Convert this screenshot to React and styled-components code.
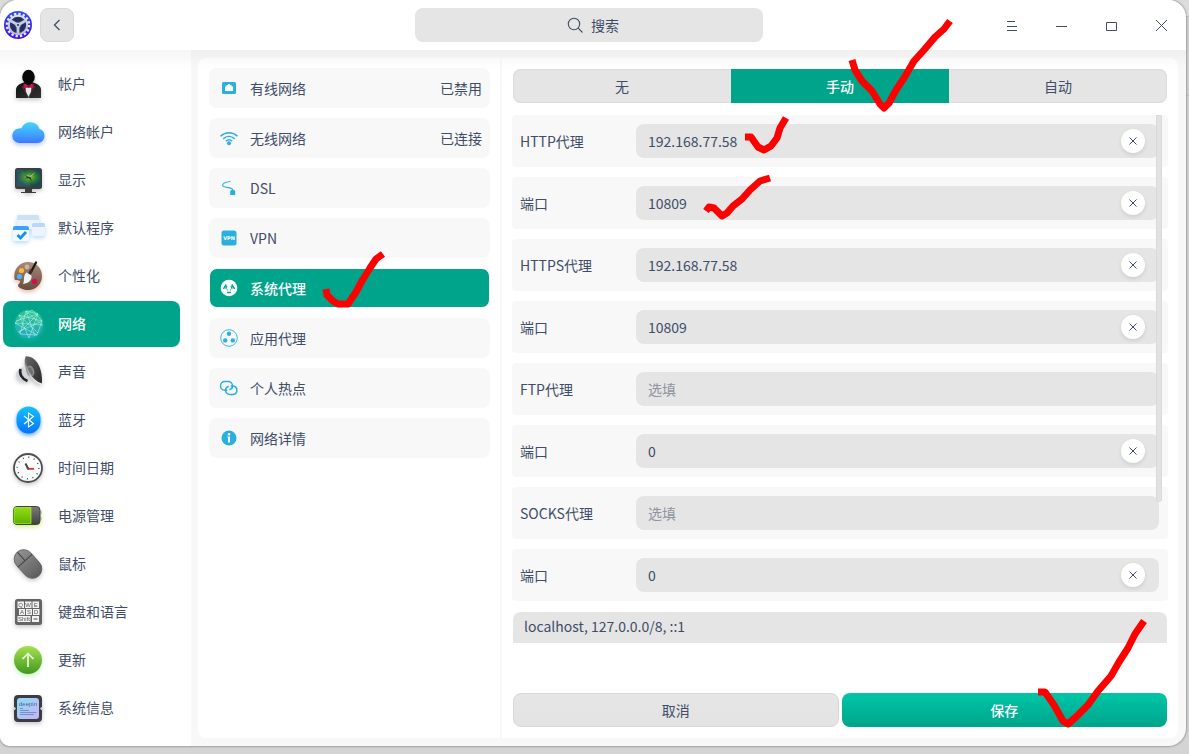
import React, { useState } from 'react';
import styled, { createGlobalStyle, css } from 'styled-components';

const accent = '#00a48a';
const ink = '#414d68';
const control = '#e5e5e5';
const blue = '#2ab0de';

const GlobalStyle = createGlobalStyle`
  * {
    box-sizing: border-box;
  }

  body {
    margin: 0;
    background: #d4d4d4;
  }

  body, button, input, textarea {
    font-family: 'Noto Sans CJK SC', sans-serif;
    font-size: 14px;
    line-height: 20px;
    color: ${ink};
  }

  button {
    padding: 0;
    border: 0;
    background: none;
    cursor: pointer;
  }
`;

const Desktop = styled.div`
  position: relative;
  display: flex;
  min-height: 100vh;
  padding: 0 3px 8px 0;
  background: linear-gradient(#dcdcdc 16px, #b4b4b4 16px, #d2d2d2 17px, #d2d2d2 95px, #b4b4b4 95px, #d4d4d4 96px);
`;

const Window = styled.div`
  flex: 1;
  display: flex;
  flex-direction: column;
  min-width: 0;
  background: #f8f8f8;
  border-radius: 18px 18px 18px 10px;
  box-shadow: 0 0 2px 1px rgba(0, 0, 0, 0.25);
  overflow: hidden;
`;

const TitleBar = styled.header`
  position: relative;
  display: grid;
  grid-template-columns: 1fr 348px 1fr;
  align-items: center;
  height: 50px;
  padding: 0 12px 0 4px;
  background: #fff;

  &::after {
    content: '';
    position: absolute;
    top: 100%;
    left: 0;
    right: 0;
    height: 20px;
    background: linear-gradient(rgba(0, 0, 0, 0.035), transparent);
    pointer-events: none;
  }
`;

const TitleGroup = styled.div`
  display: flex;
  align-items: center;
  gap: 8px;
`;

const WindowControls = styled.div`
  display: flex;
  justify-content: flex-end;
  gap: 24px;
`;

const ControlButton = styled.button`
  display: flex;
  align-items: center;
  justify-content: center;
  width: 26px;
  height: 34px;
`;

const BackButton = styled(ControlButton)`
  width: 34px;
  background: ${control};
  border: 1px solid #d9d9d9;
  border-radius: 8px;
`;

const SearchBox = styled.label`
  display: flex;
  align-items: center;
  justify-content: center;
  gap: 8px;
  height: 34px;
  padding-left: 12px;
  background: ${control};
  border-radius: 8px;
`;

const SearchInput = styled.input`
  width: 32px;
  height: 24px;
  padding: 0;
  border: 0;
  outline: 0;
  background: none;

  &::placeholder {
    color: ${ink};
    opacity: 1;
  }
`;

const Body = styled.div`
  flex: 1;
  display: flex;
`;

const Sidebar = styled.nav`
  display: flex;
  flex-direction: column;
  gap: 2px;
  width: 191px;
  padding: 11px 11px 11px 3px;
  background: #fff;
`;

const SidebarItem = styled.button`
  display: flex;
  align-items: center;
  gap: 10px;
  height: 46px;
  padding-left: 5px;
  border-radius: 8px;

  ${p => p.$active && css`
    background: ${accent};
    color: #fff;
    font-weight: 500;
  `}
`;

const SidebarName = styled.span`
  padding-bottom: 2px;
`;

const Main = styled.main`
  flex: 1;
  display: flex;
  gap: 2px;
  padding: 8px 8px 8px 7px;
`;

const ModulePanel = styled.section`
  display: flex;
  flex-direction: column;
  gap: 10px;
  width: 302px;
  padding: 10px 10px 10px 11px;
  background: #fff;
  border-radius: 8px 0 0 8px;
`;

const ModuleItem = styled.button`
  display: flex;
  align-items: center;
  gap: 11px;
  height: 40px;
  padding: 0 8px 0 10px;
  background: #f8f8f8;
  border-radius: 8px;
  text-align: left;

  ${p => p.$active && css`
    border: 1px solid #fff;
    padding: 0 7px 0 9px;
    background: ${accent};
    color: #fff;
    font-weight: 500;
  `}
`;

const ModuleName = styled.span`
  flex: 1;
`;

const DetailPanel = styled.section`
  flex: 1;
  display: flex;
  flex-direction: column;
  min-width: 0;
  padding: 11px 10px;
  background: #fff;
  border-radius: 0 8px 8px 0;
`;

const Segments = styled.div`
  display: grid;
  grid-template-columns: repeat(3, 1fr);
  height: 34px;
  margin: 0 1px 12px;
  background: ${control};
  border-radius: 8px;
  box-shadow: inset 0 0 0 1px #dcdcdc;
`;

const Segment = styled.button`
  ${p => p.$active && css`
    background: ${accent};
    color: #fff;
    font-weight: 500;
  `}
`;

const Form = styled.form`
  flex: 1;
  display: flex;
  flex-direction: column;
`;

const Rows = styled.div`
  position: relative;
  display: flex;
  flex-direction: column;
  gap: 10px;
`;

const Row = styled.div`
  display: grid;
  grid-template-columns: 116px 1fr;
  align-items: center;
  padding: 9px 9px 9px 8px;
  background: #f8f8f8;
  border-radius: 4px;
`;

const Field = styled.div`
  display: flex;
  align-items: center;
  height: 34px;
  padding: 0 14px 0 12px;
  background: ${control};
  border-radius: 8px;
`;

const FieldInput = styled.input`
  flex: 1;
  min-width: 0;
  height: 24px;
  padding: 0;
  border: 0;
  outline: 0;
  background: none;

  &::placeholder {
    color: #8f94a1;
    opacity: 1;
  }
`;

const ClearButton = styled.button`
  display: flex;
  align-items: center;
  justify-content: center;
  width: 24px;
  height: 24px;
  background: #fff;
  border-radius: 50%;
  box-shadow: 0 2px 4px rgba(0, 0, 0, 0.1);
`;

const ScrollThumb = styled.div`
  position: absolute;
  top: 0;
  right: 6px;
  width: 6px;
  height: 387px;
  background: #e2e2e2;
  border: 1px solid #dadada;
  border-radius: 0 0 3px 3px;
`;

const IgnoreHosts = styled.textarea`
  height: 31px;
  margin: 11px 1px 0;
  padding: 4px 11px;
  border: 0;
  outline: 0;
  resize: none;
  overflow: hidden;
  background: ${control};
  border-radius: 8px 8px 0 0;
`;

const Actions = styled.div`
  display: grid;
  grid-template-columns: 1fr 1fr;
  gap: 3px;
  margin: auto 1px 0;
`;

const ActionButton = styled.button`
  height: 34px;
  border: 1px solid #d8d8d8;
  border-radius: 8px;
  background: linear-gradient(#e6e6e6, #e3e3e3);

  ${p => p.$primary && css`
    border: 0;
    background: linear-gradient(#00c6a8, ${accent});
    color: #fff;
    font-weight: 500;
  `}
`;

const Glyph = styled.svg`
  flex: none;
  display: block;
`;

const ShadedGlyph = styled(Glyph)`
  filter: drop-shadow(0 2px 2px ${p => p.$glow || 'rgba(0, 0, 0, 0.22)'});
`;

const Marks = styled.svg`
  position: absolute;
  top: 0;
  left: 0;
  pointer-events: none;
`;

const Big = ({ glow, children }) => (
  <ShadedGlyph $glow={glow} width="40" height="40" viewBox="0 0 40 40" aria-hidden="true">
    {children}
  </ShadedGlyph>
);

const Small = ({ children }) => (
  <Glyph width="20" height="20" viewBox="0 0 20 20" fill={blue} aria-hidden="true">
    {children}
  </Glyph>
);

const Gradient = ({ id, from, to, x2 = 0, y2 = 1 }) => (
  <linearGradient id={id} x1="0" y1="0" x2={x2} y2={y2}>
    <stop offset="0" stopColor={from} />
    <stop offset="1" stopColor={to} />
  </linearGradient>
);

const AppLogo = () => (
  <Glyph width="28" height="28" viewBox="0 0 28 28" aria-hidden="true">
    <Gradient id="logo" from="#3050ec" to="#4510e0" />
    <Gradient id="logoRing" from="#dfe3f4" to="#b4b9dc" />
    <circle cx="14" cy="14" r="14" fill="url(#logo)" />
    <circle cx="14" cy="14" r="11" fill="none" stroke="#e9ecfb" strokeWidth="2.600" strokeDasharray="2.320 2" />
    <circle cx="14" cy="14" r="10.200" fill="url(#logoRing)" />
    <circle cx="14" cy="14" r="8.200" fill="#30364f" />
    <circle cx="14" cy="14" r="5.600" fill="none" stroke="#202a72" strokeWidth="2.400" />
    <path d="M14 14v8.500M14 14L6.600 9.700M14 14l7.400-4.300" stroke="#c5cae2" strokeWidth="2.800" />
    <circle cx="14" cy="14" r="2.600" fill="#c5cae2" />
    <circle cx="14" cy="14" r="1.100" fill="#31367a" />
  </Glyph>
);

const AccountIcon = () => (
  <Big>
    <Gradient id="suit" from="#111" to="#333" x2={1} />
    <path d="M8 34v-8c0-4 3-6 9-8h7c6 2 9 4 9 8v8z" fill="url(#suit)" />
    <path d="M17 20h7l-1 8-2.500 6L18 28z" fill="#e9e9ee" />
    <path d="M14 22l6.500 11L27 22" fill="none" stroke="#484848" strokeWidth="0.700" />
    <ellipse cx="20.500" cy="13" rx="6.300" ry="7.200" fill="#080808" />
    <path d="M17.500 16h6v5h-6z" fill="#080808" />
    <path d="M15.500 20l5 1.300 5-1.300v4.500l-5-1.300-5 1.300z" fill="#d3104f" />
    <rect x="19.300" y="20.900" width="2.400" height="2.800" rx="0.600" fill="#92052f" />
  </Big>
);

const CloudIcon = () => (
  <Big glow="rgba(60, 110, 255, 0.4)">
    <Gradient id="cloud" from="#46d7f8" to="#3d79ff" />
    <path d="M11 31a7.300 7.300 0 0 1-.5-14.500 6 6 0 0 1 3-.3A9.600 9.600 0 0 1 31.500 17 7.200 7.200 0 0 1 30 31z" fill="url(#cloud)" />
  </Big>
);

const DisplayIcon = () => (
  <Big>
    <radialGradient id="screen" cx="0.55" cy="0.45">
      <stop offset="0" stopColor="#8dc820" />
      <stop offset="0.55" stopColor="#2f7d33" />
      <stop offset="1" stopColor="#184a55" />
    </radialGradient>
    <path d="M17 28h7v4h4v1H13v-1h4z" fill="#3d3d3d" />
    <rect x="7" y="8" width="27" height="21" rx="2.500" fill="#3d3d3d" />
    <rect x="8.500" y="9.500" width="24" height="17" rx="1" fill="url(#screen)" />
    <path d="M16 15l5 2 4-4-2.500 4.500 1.500 3.500-3.500-3-3.500 1 2-2z" fill="#1e3530" />
    <path d="M22.500 17l5-5-5.500 4-4-1z" fill="#a9e0d0" />
    <path d="M8.500 9.500H15L23 26.500H8.500z" fill="#fff" opacity="0.080" />
  </Big>
);

const DefaultAppsIcon = () => (
  <Big glow="rgba(60, 150, 230, 0.35)">
    <rect x="9" y="7" width="22" height="14" rx="2" fill="#ebf4fd" />
    <path d="M9 12V9a2 2 0 0 1 2-2h18a2 2 0 0 1 2 2v3z" fill="#cbe1f8" />
    <rect x="24" y="15" width="13" height="13" rx="2" fill="#edf4fd" />
    <path d="M24 19v-2a2 2 0 0 1 2-2h9a2 2 0 0 1 2 2v2z" fill="#b9d7f8" />
    <rect x="5" y="18" width="16" height="15" rx="2" fill="#f3f9ff" />
    <path d="M5 22v-2a2 2 0 0 1 2-2h12a2 2 0 0 1 2 2v2z" fill="#3da2f6" />
    <path d="M9.500 27l3 3 5.500-6" fill="none" stroke="#1291f5" strokeWidth="2.800" />
  </Big>
);

const PaletteIcon = () => (
  <Big glow="rgba(190, 80, 50, 0.4)">
    <Gradient id="wood" from="#a58b79" to="#694c40" />
    <path d="M20 6c8 0 14 6 14 14s-6 14-14 14c-4 0-9-2-10-4 0-3 3-3 2-5-2-2-5 0-5.500-2C5 13 12 6 20 6z" fill="url(#wood)" />
    <circle cx="13.500" cy="14.500" r="2.600" fill="#ffb92e" />
    <circle cx="19" cy="11" r="2.400" fill="#d6b1a0" />
    <circle cx="11.500" cy="20.500" r="2.600" fill="#57aef5" />
    <circle cx="26.500" cy="25.500" r="2.700" fill="#d80d4c" />
    <path d="M28 6.500L23 16" stroke="#171717" strokeWidth="2.200" strokeLinecap="round" />
    <path d="M23.500 14l-2 4" stroke="#303030" strokeWidth="3" />
    <path d="M18.500 16.500l5 3c.5 5-2.500 7.500-8.500 8.500 2-4-.5-8 3.500-11.500z" fill="#f5f3f1" />
  </Big>
);

const NetworkIcon = () => (
  <Big glow="rgba(60, 210, 220, 0.3)">
    <Gradient id="net" from="#2cc48b" to="#24a9c4" />
    <circle cx="21" cy="20" r="14" fill="url(#net)" />
    <path
      d="M18 7L12 30M18 7l9 25M30 10L8 17M30 10L11 29M34 17L11 11M34 17L10 28M7 19l22 12M11 11l10 23M11 11l19 18M30 10L21 34M7 19l28 2M18 7l16 14M7 19L24 6l10 11-5 14-17-1M18 7l12 3"
      fill="none"
      stroke="#b6f4e3"
      strokeWidth="0.800"
      opacity="0.700"
    />
  </Big>
);

const SoundIcon = () => (
  <Big>
    <Gradient id="cone" from="#666" to="#292929" x2={1} />
    <Gradient id="rim" from="#555" to="#f4f4f4" />
    <path d="M15 15c-5 2-7 5-7 8 0 4 4 7 9 6l5-1z" fill="#d3d5dc" />
    <path d="M12.500 17c-1.500 5 1.500 10 7 12" fill="none" stroke="#252525" strokeWidth="2.600" />
    <path d="M17.500 5C13 14 21 31 33 32.500L26 20z" fill="#c9c9c9" />
    <path d="M18.500 4.500C27 4 34 14 34 29c0 2-.7 3-1.800 2.800C24 29 15 15 18.500 4.500z" fill="url(#cone)" />
    <ellipse cx="22.300" cy="19" rx="3.900" ry="5.600" transform="rotate(-20 22.300 19)" fill="#8d8d8d" />
    <ellipse cx="22" cy="19.500" rx="2.600" ry="4.300" transform="rotate(-20 22 19.500)" fill="#707070" />
    <path d="M18.500 4.500C15 14 23 29 33 32" fill="none" stroke="url(#rim)" strokeWidth="1.600" />
  </Big>
);

const BluetoothIcon = () => (
  <Big glow="rgba(0, 110, 255, 0.6)">
    <Gradient id="bt" from="#12c4fa" to="#0672ff" />
    <rect x="8.500" y="6.500" width="24" height="27" rx="12" fill="url(#bt)" />
    <path d="M16 16l9.500 7.500-5 3.500V13l5 3.500L16 24" fill="none" stroke="#fff" strokeWidth="1.100" />
  </Big>
);

const ClockIcon = () => (
  <Big>
    <circle cx="20" cy="20" r="14" fill="#fbfbfb" stroke="#4d5052" strokeWidth="1.800" />
    <circle cx="20" cy="20" r="10.800" fill="none" stroke="#444" strokeWidth="1.400" strokeDasharray="1 4.655" />
    <path d="M20 20.500l-2.500-5" stroke="#444" strokeWidth="2" />
    <path d="M20 20.800h6" stroke="#e8302f" strokeWidth="1.800" />
    <circle cx="20" cy="20.500" r="1.300" fill="#555" />
  </Big>
);

const BatteryIcon = () => (
  <Big glow="rgba(150, 220, 0, 0.45)">
    <Gradient id="battery" from="#95dc15" to="#5cb200" />
    <Gradient id="batteryDark" from="#7b7b7b" to="#404040" />
    <path d="M32 15h2v3h-2zM32 21h2v3h-2z" fill="#cfcfcf" />
    <rect x="5.500" y="10.500" width="26.500" height="18" rx="3.500" fill="url(#batteryDark)" stroke="#434343" />
    <path d="M8 11.500h15v16H8a2 2 0 0 1-2-2v-12a2 2 0 0 1 2-2z" fill="url(#battery)" stroke="#b0ec48" strokeWidth="0.700" />
  </Big>
);

const MouseIcon = () => (
  <Big>
    <Gradient id="mouse" from="#929292" to="#5d5d5d" />
    <g transform="rotate(-42 20 20)">
      <rect x="10.500" y="4" width="19" height="32" rx="9.500" fill="url(#mouse)" stroke="#5c5c5c" strokeWidth="0.800" />
      <path d="M10.500 15.500h19M20 4v11.500" stroke="#444" strokeWidth="1" />
    </g>
  </Big>
);

const KeyboardIcon = () => (
  <Big>
    <rect x="7" y="7" width="27" height="26" rx="2.500" fill="#656565" />
    <path d="M9.500 9.500h6.500v6.500H9.500zM17 9.500h6.500v6.500H17zM24.500 9.500H31v6.500h-6.500zM11 17h6v6h-6zM18 17h6v6h-6zM25 17h6.500v6H25zM9.500 24h13v6h-13zM24 24h7v6h-7z" fill="#f3f3f3" />
    <g fill="#555" fontSize="6" textAnchor="middle" fontFamily="Liberation Sans, sans-serif">
      <text x="12.700" y="15">Q</text>
      <text x="20.200" y="15">W</text>
      <text x="27.700" y="15">E</text>
      <text x="14" y="22.300">A</text>
      <text x="21" y="22.300">S</text>
      <text x="28.200" y="22.300">D</text>
      <text x="16" y="29.300">Shift</text>
    </g>
    <path d="M25.500 27h4" stroke="#555" />
  </Big>
);

const UpdateIcon = () => (
  <Big glow="rgba(90, 230, 50, 0.35)">
    <Gradient id="update" from="#a5e14c" to="#429722" />
    <circle cx="20" cy="20" r="14" fill="url(#update)" />
    <path d="M20 27V14M14.500 19l5.500-5.500 5.500 5.500" fill="none" stroke="#eaf8db" strokeWidth="1.700" />
  </Big>
);

const SystemIcon = () => (
  <Big>
    <Gradient id="chip" from="#8ddcf5" to="#c9b2fa" x2={1} />
    <rect x="6" y="7" width="28" height="27" rx="4" fill="#3d3d41" />
    <circle cx="6" cy="20.500" r="1.600" fill="#ddd" />
    <circle cx="34" cy="20.500" r="1.600" fill="#ddd" />
    <rect x="9" y="10" width="22" height="21" rx="3" fill="url(#chip)" />
    <text x="20" y="18" fill="#49648c" fontSize="6" textAnchor="middle" fontFamily="Liberation Sans, sans-serif">deepin</text>
    <path d="M12 20.500h3M12 22.500h9M12 24.500h16.500M12 26.500h14" stroke="#6379a6" strokeWidth="0.700" />
  </Big>
);

const WiredIcon = () => (
  <Small>
    <path d="M4.500 4h11A1.500 1.500 0 0 1 17 5.500v9a1.500 1.500 0 0 1-1.500 1.500h-11A1.500 1.500 0 0 1 3 14.500v-9A1.500 1.500 0 0 1 4.500 4z" />
    <path d="M6 13V8.500h1.500V7H9V6h2v1h1.500v1.500H14V13z" fill="#fff" />
  </Small>
);

const WifiIcon = () => (
  <Small>
    <path d="M1.500 8.200c5-4.600 12-4.600 17 0M4.200 11c3.500-3.300 8.100-3.300 11.600 0M6.800 13.300c2-1.900 4.400-1.900 6.400 0" fill="none" stroke={blue} strokeWidth="1.500" />
    <circle cx="10" cy="15.300" r="2" />
  </Small>
);

const DslIcon = () => (
  <Small>
    <path d="M11.500 3.500C7 4 3.500 5.500 3.600 7.500c.2 2.500 10 1.200 10.200 4.500" fill="none" stroke={blue} strokeWidth="1.100" />
    <path d="M12 12h3.500l.7 1.500V17h-5v-3.500z" />
  </Small>
);

const VpnIcon = () => (
  <Small>
    <rect x="2.500" y="2.500" width="15" height="15" rx="2.500" />
    <text x="10" y="12" fill="#fff" fontSize="5" fontWeight="700" textAnchor="middle" fontFamily="DejaVu Sans, sans-serif">VPN</text>
  </Small>
);

const SystemProxyIcon = () => (
  <Small>
    <circle cx="10" cy="10" r="8.300" fill="#fff" />
    <path d="M7.300 6.500L4.500 11M12.700 6.500l2.800 4.500M8 14.500h4" stroke={accent} strokeWidth="1.500" />
    <path d="M8 8.200L6.800 10.600 8.500 12.500M12 8.200l1.200 2.400-1.700 1.900" fill="none" stroke={accent} strokeWidth="1.300" />
    <circle cx="10" cy="5.600" r="2.200" fill="#fff" />
    <circle cx="6" cy="12.800" r="2.200" fill="#fff" />
    <circle cx="14" cy="12.800" r="2.200" fill="#fff" />
  </Small>
);

const AppProxyIcon = () => (
  <Small>
    <circle cx="10" cy="10" r="8.300" fill="none" stroke={blue} strokeWidth="0.900" />
    <circle cx="10" cy="5.800" r="2.200" />
    <circle cx="6.200" cy="12.400" r="2.200" />
    <circle cx="13.800" cy="12.400" r="2.200" />
  </Small>
);

const HotspotIcon = () => (
  <Small>
    <path
      d="M8.300 12.200H5.800a4.300 4.300 0 0 1 0-8.600h3.400a4.300 4.300 0 0 1 4.300 4.300c0 2-1.300 3.300-3.200 3.600M11.700 8h2.500a4.300 4.300 0 0 1 0 8.500h-3.400a4.300 4.300 0 0 1-4.200-4.300c0-2 1.200-3.300 3.200-3.600"
      fill="none"
      stroke={blue}
      strokeWidth="1.500"
    />
  </Small>
);

const InfoIcon = () => (
  <Small>
    <circle cx="10" cy="10" r="7.500" />
    <circle cx="10" cy="6.200" r="1.200" fill="#fff" />
    <path d="M8.500 8.500H11v6H9v-5h-.5z" fill="#fff" />
  </Small>
);

const modules = [
  ['帐户', AccountIcon],
  ['网络帐户', CloudIcon],
  ['显示', DisplayIcon],
  ['默认程序', DefaultAppsIcon],
  ['个性化', PaletteIcon],
  ['网络', NetworkIcon],
  ['声音', SoundIcon],
  ['蓝牙', BluetoothIcon],
  ['时间日期', ClockIcon],
  ['电源管理', BatteryIcon],
  ['鼠标', MouseIcon],
  ['键盘和语言', KeyboardIcon],
  ['更新', UpdateIcon],
  ['系统信息', SystemIcon],
];

const networkItems = [
  { name: '有线网络', icon: WiredIcon, status: '已禁用' },
  { name: '无线网络', icon: WifiIcon, status: '已连接' },
  { name: 'DSL', icon: DslIcon },
  { name: 'VPN', icon: VpnIcon },
  { name: '系统代理', icon: SystemProxyIcon },
  { name: '应用代理', icon: AppProxyIcon },
  { name: '个人热点', icon: HotspotIcon },
  { name: '网络详情', icon: InfoIcon },
];

const proxyFields = [
  { id: 'http', label: 'HTTP代理', value: '192.168.77.58' },
  { id: 'http-port', label: '端口', value: '10809' },
  { id: 'https', label: 'HTTPS代理', value: '192.168.77.58' },
  { id: 'https-port', label: '端口', value: '10809' },
  { id: 'ftp', label: 'FTP代理', value: '' },
  { id: 'ftp-port', label: '端口', value: '0' },
  { id: 'socks', label: 'SOCKS代理', value: '' },
  { id: 'socks-port', label: '端口', value: '0' },
];

const marks = [
  '326,289 327,295 333,301 338,304 348,304 356,292 362,281 370,268 376,259 383,254',
  '745,137 751,137 758,147 764,150 771,146 777,138 780,128 786,118',
  '706,211 709,207 714,208 722,216 727,213 733,206 742,199 750,190 760,181 770,178',
  '852,60 855,70 862,81 872,91 880,104 884,108 889,103 896,90 904,78 914,61 924,50 935,37 944,29 950,21',
  '1038,692 1045,692 1054,705 1063,721 1068,724 1076,717 1088,705 1098,691 1111,676 1119,662 1128,648 1135,634 1144,621',
];

const ProxyRow = ({ id, label, initial }) => {
  const [value, setValue] = useState(initial);

  return (
    <Row>
      <label htmlFor={id}>{label}</label>
      <Field>
        <FieldInput id={id} value={value} placeholder="选填" onChange={e => setValue(e.target.value)} />
        {value &&
          <ClearButton type="button" aria-label="清除" onClick={() => setValue('')}>
            <Glyph width="8" height="8" viewBox="0 0 8 8" stroke={ink}>
              <path d="M0.500 0.500l7 7M7.500 0.500l-7 7" />
            </Glyph>
          </ClearButton>
        }
      </Field>
    </Row>
  );
};

export default function App() {
  const [module, setModule] = useState('网络');
  const [item, setItem] = useState('系统代理');
  const [mode, setMode] = useState('手动');

  return (
    <Desktop>
      <GlobalStyle />
      <Window>
        <TitleBar>
          <TitleGroup>
            <AppLogo />
            <BackButton aria-label="返回">
              <Glyph width="8" height="12" viewBox="0 0 8 12" fill="none" stroke={ink} strokeWidth="1.300">
                <path d="M6.500 1l-5 5 5 5" />
              </Glyph>
            </BackButton>
          </TitleGroup>
          <SearchBox>
            <Glyph width="16" height="16" viewBox="0 0 16 16" fill="none" stroke={ink} strokeWidth="1.100">
              <circle cx="7" cy="7" r="5.700" />
              <path d="M11.200 11.200l4.300 4.300" />
            </Glyph>
            <SearchInput placeholder="搜索" aria-label="搜索" />
          </SearchBox>
          <WindowControls>
            <ControlButton aria-label="菜单">
              <Glyph width="12" height="12" viewBox="0 0 12 12" stroke={ink}>
                <path d="M2 2.500h8M2 7.500h10M2 11.500h10" />
              </Glyph>
            </ControlButton>
            <ControlButton aria-label="最小化">
              <Glyph width="12" height="12" viewBox="0 0 12 12" stroke={ink}>
                <path d="M1 7.500h11" />
              </Glyph>
            </ControlButton>
            <ControlButton aria-label="最大化">
              <Glyph width="12" height="12" viewBox="0 0 12 12" fill="none" stroke={ink}>
                <path d="M1.500 3.500h10v8h-10z" />
              </Glyph>
            </ControlButton>
            <ControlButton aria-label="关闭">
              <Glyph width="12" height="12" viewBox="0 0 12 12" stroke={ink}>
                <path d="M1 1l11 11M12 1l-11 11" />
              </Glyph>
            </ControlButton>
          </WindowControls>
        </TitleBar>
        <Body>
          <Sidebar>
            {modules.map(([name, Icon]) => (
              <SidebarItem key={name} $active={name === module} onClick={() => setModule(name)}>
                <Icon />
                <SidebarName>{name}</SidebarName>
              </SidebarItem>
            ))}
          </Sidebar>
          <Main>
            <ModulePanel>
              {networkItems.map(({ name, icon: Icon, status }) => (
                <ModuleItem key={name} $active={name === item} onClick={() => setItem(name)}>
                  <Icon />
                  <ModuleName>{name}</ModuleName>
                  {status && <span>{status}</span>}
                </ModuleItem>
              ))}
            </ModulePanel>
            <DetailPanel>
              <Segments>
                {['无', '手动', '自动'].map(name => (
                  <Segment key={name} $active={name === mode} onClick={() => setMode(name)}>
                    {name}
                  </Segment>
                ))}
              </Segments>
              <Form onSubmit={e => e.preventDefault()}>
                <Rows>
                  {proxyFields.map(({ id, label, value }) => (
                    <ProxyRow key={id} id={id} label={label} initial={value} />
                  ))}
                  <ScrollThumb />
                </Rows>
                <IgnoreHosts aria-label="忽略的主机" defaultValue="localhost, 127.0.0.0/8, ::1" />
                <Actions>
                  <ActionButton type="button">取消</ActionButton>
                  <ActionButton type="submit" $primary>保存</ActionButton>
                </Actions>
              </Form>
            </DetailPanel>
          </Main>
        </Body>
      </Window>
      <Marks width="1189" height="754" fill="none" stroke="#fe0000" strokeWidth="7" strokeLinejoin="round">
        {marks.map(points => <polyline key={points} points={points} />)}
      </Marks>
    </Desktop>
  );
}
